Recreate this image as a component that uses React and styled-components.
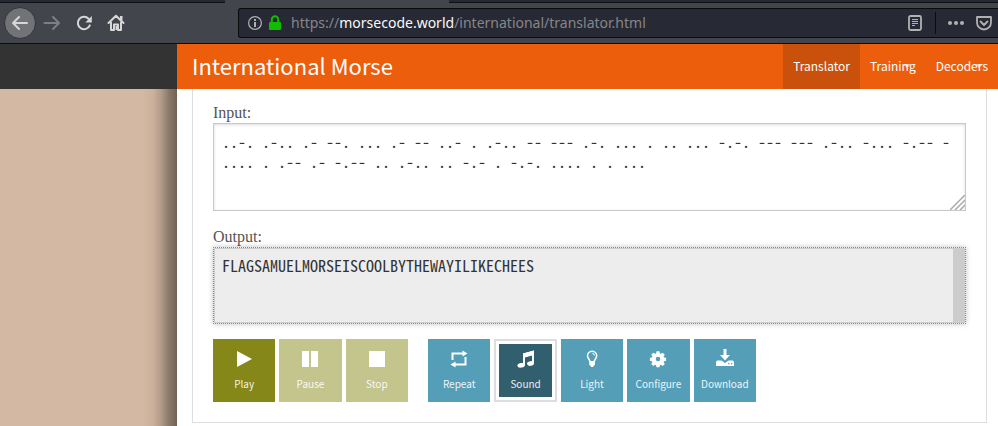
import React, { useState } from "react";
import styled, { createGlobalStyle, css } from "styled-components";

const GlobalStyle = createGlobalStyle`
  *, *::before, *::after { box-sizing: border-box; }
  body { margin: 0; background: #d3b8a3; }
  button, textarea { font: inherit; margin: 0; }
`;

const humanist = `"Noto Sans CJK SC", "Open Sans", sans-serif`;

const Page = styled.div`
  min-height: 100vh;
  display: flex;
  flex-direction: column;
  font-family: ${humanist};
`;

/* Browser chrome */
const TabStrip = styled.div`
  display: grid;
  grid-template-columns: 225px 224px 1fr;
  height: 3px;
  background: #42454c;
`;

const Tab = styled.div`
  background: ${(p) => (p.$active ? "#42454c" : "#252833")};
  border-bottom: 1px solid ${(p) => (p.$active ? "#42454c" : "#0f1116")};
`;

const Toolbar = styled.div`
  display: flex;
  align-items: center;
  height: 41px;
  padding-left: 4px;
  background: #42454c;
  border-bottom: 1px solid #0c0c0d;
`;

const ToolButton = styled.button`
  display: grid;
  place-items: center;
  width: 32px;
  height: 32px;
  padding: 0;
  border: 0;
  border-radius: 50%;
  background: none;
  color: ${(p) => (p.$dim ? "#7d7f83" : "#d7d7d8")};
  ${(p) =>
    p.$round &&
    css`
      background: #727376;
      border: 1px solid #33353b;
    `}
`;

const AddressBar = styled.div`
  flex: 1;
  display: flex;
  align-items: center;
  height: 30px;
  margin-left: 106px;
  padding-left: 8px;
  gap: 6px;
  background: #272934;
  border: 1px solid #0c0c0d;
  border-right: 0;
  border-radius: 3px 0 0 3px;
`;

const Address = styled.div`
  flex: 1;
  margin-left: 4px;
  font: 14px/20px "Noto Sans", sans-serif;
  color: #85868a;
  white-space: nowrap;
`;

const Host = styled.span`
  color: #f9f9fa;
`;

const BarButton = styled.button`
  display: grid;
  place-items: center;
  width: 16px;
  height: 16px;
  padding: 0;
  border: 0;
  background: none;
  color: #b1b1b3;
`;

const BarActions = styled.div`
  display: flex;
  align-items: center;
  gap: 12px;
  padding-right: 6px;
`;

const Divider = styled.span`
  width: 1px;
  height: 22px;
  background: #0c0c0d;
`;

/* Site header */
const Masthead = styled.header`
  display: grid;
  grid-template-columns: 177px 1fr;
  background: #333;
`;

const Banner = styled.div`
  display: flex;
  justify-content: space-between;
  height: 45px;
  padding-left: 15px;
  background: #ec5e0c;
`;

const Title = styled.h1`
  margin: 0;
  font: 400 22px/42px ${humanist};
  color: #fff;
`;

const Nav = styled.nav`
  display: flex;
`;

const NavLink = styled.a`
  position: relative;
  padding: 0 10px;
  font-size: 12px;
  line-height: 43px;
  color: #fff;
  text-decoration: none;
  background: ${(p) => (p.$current ? "#c9510b" : "transparent")};
`;

const Caret = styled.span`
  position: absolute;
  top: 20px;
  right: 15px;
  border: 4px solid transparent;
  border-top-color: rgba(255, 255, 255, 0.6);
  border-bottom: 0;
`;

/* Page body */
const Body = styled.div`
  flex: 1;
  display: grid;
  grid-template-columns: 177px 1fr;
`;

const Margin = styled.div`
  background: linear-gradient(
    to left,
    #716254 0,
    #8a796a 8px,
    #b29b89 16px,
    #cbb19d 24px,
    #d3b8a3 34px
  );
`;

const Sheet = styled.main`
  padding: 0 11px 3px 15px;
  background: #fff;
`;

const Panel = styled.form`
  padding: 14px 20px 20px;
  border: 1px solid #ddd;
  border-top: 0;
`;

const Field = styled.div`
  display: flex;
  flex-direction: column;
  margin-bottom: ${(p) => (p.$last ? "15px" : "16px")};
`;

const Label = styled.label`
  font: 16px/20px "Liberation Serif", serif;
  color: #555;
`;

const InputFrame = styled.div`
  position: relative;
  display: flex;
`;

const TextBox = styled.textarea`
  display: block;
  width: 100%;
  height: 88px;
  padding: 7px 8px;
  border: 1px solid #c9c9c9;
  outline: 0;
  resize: none;
  overflow: hidden;
  background: #fff;
  box-shadow: inset 0 1px 3px rgba(0, 0, 0, 0.14);
  color: #333;
  font: 16px/20px "Noto Sans CJK SC", monospace;
  font-feature-settings: "hwid";
`;

const OutputBox = styled(TextBox)`
  height: 77px;
  border: 1px dotted #888;
  background: linear-gradient(#ccc, #ccc) right / 12px 100% no-repeat, #ededed;
  box-shadow: inset 0 0 0 1px #ccc, 0 0 5px rgba(0, 0, 0, 0.25);
`;

const Grip = styled.svg`
  position: absolute;
  right: 1px;
  bottom: 1px;
`;

const Controls = styled.div`
  display: flex;
  flex-wrap: wrap;
  gap: 20px;
`;

const Group = styled.div`
  display: grid;
  grid-template-columns: repeat(${(p) => p.$count}, 1fr);
  gap: 4px;
  width: ${(p) => p.$width}px;
`;

const tones = { olive: "#858719", faded: "#c4c48d", blue: "#549eb8", selected: "#315f6e" };

const Tile = styled.button`
  display: flex;
  flex-direction: column;
  align-items: center;
  gap: 7px;
  height: 63px;
  padding: 10px 0 0;
  border: 0;
  background: ${(p) => tones[p.$tone]};
  color: #fff;
  font-size: 10px;
  line-height: 16px;
  ${(p) =>
    p.$tone === "selected" &&
    css`
      padding-top: 8px;
      border: 2px solid #ddd;
      box-shadow: inset 0 0 0 3px #fff;
    `}
`;

const TileText = styled.span`
  opacity: 0.9;
`;

const Svg = ({ size = 20, children, box = 20 }) => (
  <svg width={size} height={size} viewBox={`0 0 ${box} ${box}`} fill="currentColor" aria-hidden="true">
    {children}
  </svg>
);

const stroke = { fill: "none", stroke: "currentColor", strokeWidth: 2, strokeLinecap: "round", strokeLinejoin: "round" };

const icons = {
  Play: <path d="M3 2 18 10 3 18Z" />,
  Pause: <path d="M2 2h7v16H2zM11 2h7v16h-7z" />,
  Stop: <path d="M2 2h16v16H2z" />,
  Repeat: (
    <>
      <path d="M3.500 11V4.500H14M16.500 8v7.500H6" fill="none" stroke="currentColor" strokeWidth="2" />
      <path d="M13.500 1.500 18.500 4.500 13.500 7.500ZM6.500 12.500 1.500 15.500 6.500 18.500Z" />
    </>
  ),
  Sound: (
    <>
      <path d="M7 4.500 18 1.500v13h-2V6L9 8v8.500H7Z" />
      <path d="M7 4.500 18 1.500V6L7 9Z" />
      <ellipse cx="5.200" cy="16.300" rx="3.800" ry="2.300" transform="rotate(-10 5.200 16.300)" />
      <ellipse cx="14.500" cy="14.500" rx="3.500" ry="2.300" transform="rotate(-10 14.500 14.500)" />
    </>
  ),
  Light: (
    <>
      <path
        d="M8 13C8 10.500 5.500 9.500 5.500 6.800A4.600 4.600 0 0 1 14.700 6.800C14.700 9.500 12.200 10.500 12.200 13Z"
        fill="none"
        stroke="currentColor"
        strokeWidth="1.500"
      />
      <path d="M10.300 4.400q2.200.2 2.200 2.200" fill="none" stroke="currentColor" />
      <path d="M7.300 12h5.600v4l-1.400 1L11 18H9.300l-.6-1-1.400-1Z" />
    </>
  ),
  Configure: (
    <path
      fillRule="evenodd"
      d="M8.300 2h3.400l.5 2.300 1.200.5 2-1.300 2.300 2.300-1.300 2 .5 1.100 2.300.5v3.300l-2.300.5-.5 1.100 1.300 2-2.300 2.300-2-1.300-1.200.5-.5 2.300H8.300l-.5-2.300-1.200-.5-2 1.300-2.300-2.300 1.300-2-.5-1.100L.8 12.700V9.400l2.300-.5.5-1.100-1.300-2 2.300-2.300 2 1.300 1.200-.5ZM10 8a2.600 2.600 0 1 0 0 5.200A2.600 2.600 0 0 0 10 8Z"
      transform="translate(1.200 .6) scale(.88)"
    />
  ),
  Download: (
    <path
      fillRule="evenodd"
      d="M8.500 0h3v6H15l-5 5.500L5 6h3.500ZM2 11.500h4.500L10 14l3.500-2.500H18l1 1.500v4H1v-4ZM13.200 14v1.300h1.300V14ZM16 14v1.300h1.300V14Z"
    />
  ),
};

const playback = [
  { name: "Play", tone: "olive" },
  { name: "Pause", tone: "faded" },
  { name: "Stop", tone: "faded" },
];
const options = ["Repeat", "Sound", "Light", "Configure", "Download"];

const morse =
  "..-. .-.. .- --. ... .- -- ..- . .-.. -- --- .-. ... . .. ... -.-. --- --- .-.. -... -.-- - .... . .-- .- -.-- .. .-.. .. -.- . -.-. .... . . ...";

export default function App() {
  const [code, setCode] = useState(morse);
  const [selected, setSelected] = useState("Sound");

  return (
    <Page>
      <GlobalStyle />
      <TabStrip>
        <Tab />
        <Tab $active />
        <Tab />
      </TabStrip>
      <Toolbar>
        <ToolButton $round aria-label="Back">
          <Svg><path {...stroke} d="M17 10H3M9 4l-6 6 6 6" /></Svg>
        </ToolButton>
        <ToolButton $dim aria-label="Forward">
          <Svg><path {...stroke} d="M2.500 10H17M11 4l6 6-6 6" /></Svg>
        </ToolButton>
        <ToolButton aria-label="Reload">
          <Svg>
            <path {...stroke} d="M15.800 12.400A6.200 6.200 0 1 1 14.500 5.700" />
            <path d="M17.800 3v6.500h-6.500Z" />
          </Svg>
        </ToolButton>
        <ToolButton aria-label="Home">
          <Svg>
            <path {...stroke} d="M2.500 10 10 2.800 17.500 10M5 9.500V17h3V11.500h4V17h3V9.500" />
            <path d="M9.500 13H12v4H9.500zM14 3h2.500v4.500H14z" />
          </Svg>
        </ToolButton>
        <AddressBar>
          <BarButton aria-label="Site information">
            <Svg size={16} box={16}>
              <circle cx="8" cy="8" r="6.400" fill="none" stroke="currentColor" strokeWidth="1.200" />
              <path d="M7 7h2v5H7zM7 4h2v2H7z" />
            </Svg>
          </BarButton>
          <svg width="12" height="16" viewBox="0 0 12 16" aria-hidden="true">
            <path d="M2.800 8V4.500a3.200 3.200 0 0 1 6.400 0V8" fill="none" stroke="#12bc00" strokeWidth="2" />
            <rect y="7" width="12" height="8" rx="1" fill="#12bc00" />
          </svg>
          <Address role="textbox" aria-label="Address">
            https://<Host>morsecode.world</Host>/international/translator.html
          </Address>
          <BarActions>
            <BarButton aria-label="Reader view">
              <Svg size={16} box={16}>
                <rect x="2" y="1" width="12" height="14" rx="1.500" fill="none" stroke="currentColor" strokeWidth="1.800" />
                <path d="M5 4.500h6M5 6.500h6M5 8.500h6M5 10.500h3" stroke="currentColor" />
              </Svg>
            </BarButton>
            <Divider />
            <BarButton aria-label="Page actions">
              <Svg size={16} box={16}>
                <circle cx="2" cy="8" r="2" />
                <circle cx="8" cy="8" r="2" />
                <circle cx="14" cy="8" r="2" />
              </Svg>
            </BarButton>
            <BarButton aria-label="Save to Pocket">
              <Svg size={16} box={16}>
                <path {...stroke} d="M1 2h14v5.500a7 7 0 0 1-14 0ZM4.500 6.500 8 10l3.500-3.500" strokeWidth="1.800" />
              </Svg>
            </BarButton>
          </BarActions>
        </AddressBar>
      </Toolbar>
      <Masthead>
        <span />
        <Banner>
          <Title>International Morse</Title>
          <Nav>
            <NavLink href="#translator" $current>Translator</NavLink>
            <NavLink href="#training">Training<Caret /></NavLink>
            <NavLink href="#decoders">Decoders<Caret /></NavLink>
          </Nav>
        </Banner>
      </Masthead>
      <Body>
        <Margin />
        <Sheet>
          <Panel onSubmit={(e) => e.preventDefault()}>
            <Field>
              <Label htmlFor="input">Input:</Label>
              <InputFrame>
                <TextBox id="input" spellCheck={false} value={code} onChange={(e) => setCode(e.target.value)} />
                <Grip width="15" height="15" viewBox="0 0 15 15" aria-hidden="true">
                  <path d="M0 15 15 0M5 15 15 5M10 15l5-5" stroke="#aaa" strokeWidth="1.500" />
                </Grip>
              </InputFrame>
            </Field>
            <Field $last>
              <Label htmlFor="output">Output:</Label>
              <OutputBox id="output" readOnly spellCheck={false} value="FLAGSAMUELMORSEISCOOLBYTHEWAYILIKECHEES" />
            </Field>
            <Controls>
              <Group $count={3} $width={195}>
                {playback.map(({ name, tone }) => (
                  <Tile key={name} type="button" $tone={tone}>
                    <Svg>{icons[name]}</Svg>
                    <TileText>{name}</TileText>
                  </Tile>
                ))}
              </Group>
              <Group $count={5} $width={328}>
                {options.map((name) => (
                  <Tile
                    key={name}
                    type="button"
                    $tone={selected === name ? "selected" : "blue"}
                    onClick={() => setSelected(name)}
                  >
                    <Svg>{icons[name]}</Svg>
                    <TileText>{name}</TileText>
                  </Tile>
                ))}
              </Group>
            </Controls>
          </Panel>
        </Sheet>
      </Body>
    </Page>
  );
}
